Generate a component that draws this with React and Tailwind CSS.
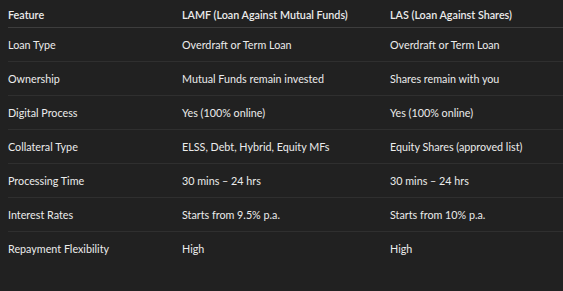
import React from 'react';

const rows = [
  ['Loan Type', 'Overdraft or Term Loan', 'Overdraft or Term Loan'],
  ['Ownership', 'Mutual Funds remain invested', 'Shares remain with you'],
  ['Digital Process', 'Yes (100% online)', 'Yes (100% online)'],
  ['Collateral Type', 'ELSS, Debt, Hybrid, Equity MFs', 'Equity Shares (approved list)'],
  ['Processing Time', '30 mins – 24 hrs', '30 mins – 24 hrs'],
  ['Interest Rates', 'Starts from 9.5% p.a.', 'Starts from 10% p.a.'],
  ['Repayment Flexibility', 'High', 'High'],
];

export default function App() {
  return (
    <div className="w-[563px] h-[291px] bg-[#212121] text-[#ececec] text-[10.75px] leading-[17px] pl-2 overflow-hidden" style={{ fontFamily: 'Lato, "Noto Sans", sans-serif' }}>
      {/* header */}
      <div className="grid grid-cols-[174px_208px_1fr] pt-[6px] pb-[4px] border-b border-[#3d3d3d] font-semibold">
        <div>Feature</div>
        <div>LAMF (Loan Against Mutual Funds)</div>
        <div>LAS (Loan Against Shares)</div>
      </div>
      {rows.map((r, i) => (
        <div
          key={r[0]}
          className={`grid grid-cols-[174px_208px_1fr] py-2 ${i < rows.length - 1 ? 'border-b border-[#2f2f2f]' : ''}`}
        >
          <div>{r[0]}</div>
          <div>{r[1]}</div>
          <div>{r[2]}</div>
        </div>
      ))}
    </div>
  );
}
